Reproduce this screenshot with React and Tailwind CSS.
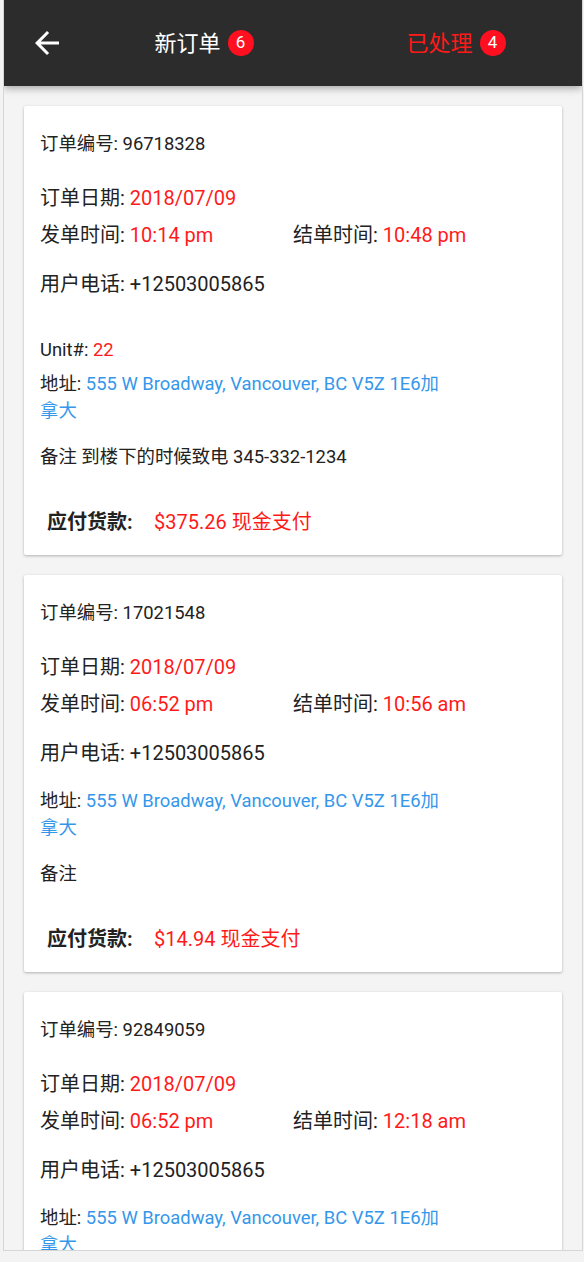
import React from 'react';

const orders = [
  {
    id: '96718328',
    date: '2018/07/09',
    start: '10:14 pm',
    end: '10:48 pm',
    phone: '+12503005865',
    unit: '22',
    address: '555 W Broadway, Vancouver, BC V5Z 1E6加拿大',
    note: '到楼下的时候致电 345-332-1234',
    amount: '$375.26 现金支付',
  },
  {
    id: '17021548',
    date: '2018/07/09',
    start: '06:52 pm',
    end: '10:56 am',
    phone: '+12503005865',
    address: '555 W Broadway, Vancouver, BC V5Z 1E6加拿大',
    note: '',
    amount: '$14.94 现金支付',
  },
  {
    id: '92849059',
    date: '2018/07/09',
    start: '06:52 pm',
    end: '12:18 am',
    phone: '+12503005865',
    address: '555 W Broadway, Vancouver, BC V5Z 1E6加拿大',
    note: '',
    amount: '$14.94 现金支付',
  },
];

function OrderCard({ order }) {
  return (
    <div className="bg-white rounded-[2px] shadow-[0_1px_3px_rgba(0,0,0,0.28)] px-4 pt-[26px] pb-[19px] text-[#222]">
      <div className="h-6 leading-6 text-[18.4px]">订单编号: {order.id}</div>

      <div className="mt-[28px] h-7 leading-7 text-[20px]">
        订单日期: <span className="text-[#ff1a1a]">{order.date}</span>
      </div>
      <div className="mt-[9px] h-7 leading-7 text-[20px] flex">
        <div className="flex-1">
          发单时间: <span className="text-[#ff1a1a]">{order.start}</span>
        </div>
        <div className="flex-1">
          结单时间: <span className="text-[#ff1a1a]">{order.end}</span>
        </div>
      </div>

      <div className="mt-[21px] h-7 leading-7 text-[20px]">用户电话: {order.phone}</div>

      {order.unit && (
        <div className="mt-[40px] h-6 leading-6 text-[18.4px]">
          Unit#: <span className="text-[#ff1a1a]">{order.unit}</span>
        </div>
      )}

      <div className={`${order.unit ? 'mt-2' : 'mt-5'} max-w-[402px] leading-[27px] text-[18.4px]`}>
        地址: <span className="text-[#3597ea]">{order.address}</span>
      </div>

      <div className="mt-[21px] h-6 leading-6 text-[18.4px]">
        备注{order.note ? ' ' + order.note : ''}
      </div>

      <div className="mt-[39px] h-7 leading-7 text-[20px] flex pl-[7px]">
        <span className="font-bold w-[107px]">应付货款:</span>
        <span className="text-[#ff1a1a]">{order.amount}</span>
      </div>
    </div>
  );
}

function Badge({ n }) {
  return (
    <span className="ml-[7px] w-[26px] h-[26px] rounded-full bg-[#ff0f1f] text-white text-[17px] flex items-center justify-center">
      {n}
    </span>
  );
}

export default function App() {
  return (
    <div
      className="min-h-[1262px] bg-[#f3f3f3]"
      style={{ fontFamily: 'Roboto, "Noto Sans CJK SC", sans-serif' }}
    >
      <div className="ml-[3px] w-[580px] h-[1251px] border-x border-b border-[#d6d6d6] bg-[#f4f4f4] overflow-hidden flex flex-col">
        {/* Header */}
        <div className="relative z-10 h-[86px] shrink-0 bg-[#2c2c2c] shadow-[0_2px_8px_rgba(0,0,0,0.35)] flex items-center">
          <div className="w-[74px] pl-[25px] flex items-center">
            <svg width="36" height="36" viewBox="0 0 24 24" fill="#fff">
              <path d="M20 11H7.83l5.59-5.59L12 4l-8 8 8 8 1.41-1.41L7.83 13H20v-2z" />
            </svg>
          </div>
          <div className="flex-1 flex items-center justify-center text-white text-[22px]">
            新订单
            <Badge n={6} />
          </div>
          <div className="flex-1 flex items-center justify-center text-[#ff1a1a] text-[22px]">
            已处理
            <Badge n={4} />
          </div>
        </div>

        {/* List */}
        <div className="flex flex-col gap-5 p-5">
          {orders.map((o) => (
            <OrderCard key={o.id} order={o} />
          ))}
        </div>
      </div>
    </div>
  );
}
